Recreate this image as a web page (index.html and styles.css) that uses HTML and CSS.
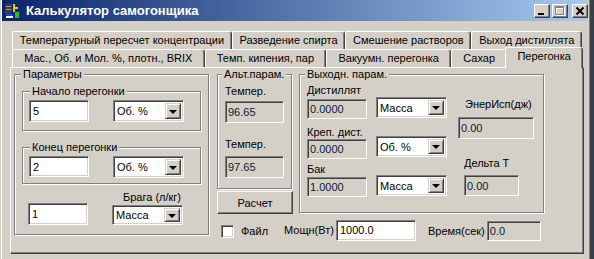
FILE: index.html
```html
<!doctype html>
<html lang="ru">
    <head>
        <meta charset="UTF-8" />
        <title>Калькулятор самогонщика</title>
        <link rel="stylesheet" href="styles.css">
    </head>
    <body>
        <div class="window">
            <div class="titlebar">
                <svg class="app-icon" width="16" height="16" viewBox="0 0 16 16" shape-rendering="crispEdges">
                    <rect x="1" y="1" width="7" height="10" fill="#3c3c3c" />
                    <rect x="2" y="3" width="5" height="1" fill="#9a9a9a" />
                    <rect x="2" y="6" width="5" height="1" fill="#9a9a9a" />
                    <rect x="9" y="1" width="2" height="8" fill="#e8d000" />
                    <rect x="11" y="4" width="3" height="2" fill="#e8d000" />
                    <rect x="2" y="11" width="7" height="2" fill="#1c3cd8" />
                    <rect x="2" y="13" width="7" height="2" fill="#ffffff" />
                    <rect x="11" y="9" width="4" height="6" fill="#20c020" />
                </svg>
                <span class="title">Калькулятор самогонщика</span>
                <div class="caption-buttons">
                    <div class="cap-btn">
                        <svg width="14" height="12" viewBox="0 0 14 12" shape-rendering="crispEdges">
                            <rect x="3" y="8" width="6" height="2" fill="#000" />
                        </svg>
                    </div>
                    <div class="cap-btn">
                        <svg width="14" height="12" viewBox="0 0 14 12" shape-rendering="crispEdges">
                            <path d="M3 2h9v9h-9z M4 4v6h7v-6z" fill="#fff" fill-rule="evenodd" />
                            <path d="M2 1h9v9h-9z M3 3v6h7v-6z" fill="#808080" fill-rule="evenodd" />
                        </svg>
                    </div>
                    <div class="cap-btn close">
                        <svg width="14" height="12" viewBox="0 0 14 12">
                            <path d="M3.5 2.5l7 7M10.5 2.5l-7 7" stroke="#000" stroke-width="2" />
                        </svg>
                    </div>
                </div>
            </div>

            <div class="client">
                <div class="tab-row">
                    <div class="tab">Температурный пересчет концентрации</div>
                    <div class="tab">Разведение спирта</div>
                    <div class="tab">Смешение растворов</div>
                    <div class="tab">Выход дистиллята</div>
                </div>
                <div class="tab-row front">
                    <div class="tab">Мас., Об. и Мол. %, плотн., BRIX</div>
                    <div class="tab">Темп. кипения, пар</div>
                    <div class="tab">Вакуумн. перегонка</div>
                    <div class="tab">Сахар</div>
                    <div class="tab active">Перегонка</div>
                </div>

                <div class="panel">
                    <fieldset class="group params">
                        <legend>Параметры</legend>
                        <fieldset class="group sub start">
                            <legend>Начало перегонки</legend>
                            <div class="pair">
                                <div class="edit">5</div>
                                <div class="combo"><span>Об. %</span><i class="drop"></i></div>
                            </div>
                        </fieldset>
                        <fieldset class="group sub end">
                            <legend>Конец перегонки</legend>
                            <div class="pair">
                                <div class="edit">2</div>
                                <div class="combo"><span>Об. %</span><i class="drop"></i></div>
                            </div>
                        </fieldset>
                        <div class="pair braga">
                            <div class="edit">1</div>
                            <div class="braga-col">
                                <div class="label braga-label">Брага (л/кг)</div>
                                <div class="combo"><span>Масса</span><i class="drop"></i></div>
                            </div>
                        </div>
                    </fieldset>

                    <div class="right">
                        <div class="right-top">
                            <div class="alt-col">
                                <fieldset class="group alt">
                                    <legend>Альт.парам.</legend>
                                    <div class="label">Темпер.</div>
                                    <div class="edit ro">96.65</div>
                                    <div class="label second">Темпер.</div>
                                    <div class="edit ro">97.65</div>
                                </fieldset>
                                <div class="button">Расчет</div>
                            </div>

                            <fieldset class="group out">
                                <legend>Выходн. парам.</legend>
                                <div class="out-body">
                                    <div class="col c1">
                                        <div class="label">Дистиллят</div>
                                        <div class="edit ro">0.0000</div>
                                        <div class="label">Креп. дист.</div>
                                        <div class="edit ro">0.0000</div>
                                        <div class="label">Бак</div>
                                        <div class="edit ro">1.0000</div>
                                    </div>
                                    <div class="col c2">
                                        <div class="combo"><span>Масса</span><i class="drop"></i></div>
                                        <div class="combo"><span>Об. %</span><i class="drop"></i></div>
                                        <div class="combo"><span>Масса</span><i class="drop"></i></div>
                                    </div>
                                    <div class="col c3">
                                        <div class="label energy-label">ЭнерИсп(дж)</div>
                                        <div class="edit ro energy">0.00</div>
                                        <div class="label delta-label">Дельта Т</div>
                                        <div class="edit ro delta">0.00</div>
                                    </div>
                                </div>
                            </fieldset>
                        </div>

                        <div class="bottom-row">
                            <span class="checkbox"></span>
                            <span class="label file-label">Файл</span>
                            <span class="label power-label">Мощн(Вт)</span>
                            <div class="edit power">1000.0</div>
                            <span class="label time-label">Время(сек)</span>
                            <div class="edit ro time">0.0</div>
                        </div>
                    </div>
                </div>
            </div>
        </div>
    </body>
</html>
```

FILE: styles.css
```css
body {
    margin: 0;
    background-color: #34404e;
    font-family: "Liberation Sans", Arial, sans-serif;
    font-size: 11px;
    color: #000;
}

.window {
    box-sizing: border-box;
    width: 591px;
    height: 262px;
    background-color: #d4d0c8;
    border-left: 1px solid #d4d0c8;
    border-right: 1px solid #404040;
    box-shadow: inset 1px 0 #fff, inset -1px 0 #808080;
}

/* title bar */
.titlebar {
    height: 21px;
    margin: 0 2px 0 1px;
    padding-left: 2px;
    display: flex;
    align-items: center;
    background: linear-gradient(90deg, #0a246a, #a6caf0);
    color: #fff;
}

.app-icon {
    flex: none;
}

.title {
    margin-left: 6px;
    font-size: 13px;
    font-weight: 700;
    white-space: nowrap;
}

.caption-buttons {
    margin-left: auto;
    display: flex;
    gap: 2px;
}

.cap-btn {
    box-sizing: border-box;
    width: 16px;
    height: 14px;
    background-color: #d4d0c8;
    border: 1px solid;
    border-color: #fff #404040 #404040 #fff;
    box-shadow: inset -1px -1px #808080;
}

.cap-btn svg {
    display: block;
}

.cap-btn.close {
    margin-left: 2px;
}

/* tabs */
.client {
    padding: 10px 6px 0 9px;
}

.tab-row {
    display: flex;
    height: 18px;
    margin: 0 2px 0 2px;
}

.tab {
    flex: 1 1 auto;
    box-sizing: border-box;
    height: 18px;
    border: 1px solid;
    border-bottom: none;
    border-color: #fff #404040 #fff #fff;
    border-radius: 2px 3px 0 0;
    box-shadow: inset -1px 0 #808080;
    text-align: center;
    line-height: 17px;
    white-space: nowrap;
    padding: 0 6px;
}

.tab.active {
    position: relative;
    z-index: 1;
    height: 21px;
    margin: -2px -1px 0 -2px;
    background-color: #d4d0c8;
    line-height: 17px;
}

.panel {
    box-sizing: border-box;
    height: 187px;
    display: flex;
    align-items: flex-start;
    padding: 0 0 0 3px;
    border: 1px solid;
    border-color: #fff #404040 #404040 #fff;
    box-shadow: inset -1px -1px #808080;
}

/* group boxes */
.group {
    box-sizing: border-box;
    margin: 0;
    padding: 0;
    min-width: 0;
    border: 1px solid #808080;
    box-shadow: inset 1px 1px #fff, 1px 1px #fff;
}

.group legend {
    padding: 0 2px;
    line-height: 13px;
    background-color: #d4d0c8;
}

.label {
    line-height: 13px;
    white-space: nowrap;
}

.params {
    width: 195px;
    padding-bottom: 9px;
}

.params > legend {
    margin-left: 6px;
}

.sub {
    width: 179px;
    margin-left: 7px;
}

.sub > legend {
    margin-left: 7px;
}

.start {
    margin-top: 4px;
    padding-bottom: 8px;
}

.end {
    margin-top: 10px;
    padding-bottom: 5px;
}

.pair {
    display: flex;
    align-items: flex-start;
    margin-top: 2px;
}

.pair .edit {
    width: 60px;
    height: 22px;
    margin-left: 6px;
}

.pair .combo {
    margin-left: 24px;
}

.end .edit {
    height: 21px;
}

.braga {
    align-items: flex-end;
    margin-top: 7px;
}

.braga .edit {
    margin-left: 13px;
}

.braga-col {
    display: flex;
    flex-direction: column;
}

.braga-label {
    margin-left: 35px;
    margin-bottom: 1px;
}

.braga .combo {
    height: 20px;
}

/* inputs */
.edit {
    box-sizing: border-box;
    height: 21px;
    padding: 0 3px;
    background-color: #fff;
    border: 1px solid;
    border-color: #808080 #fff #fff #808080;
    box-shadow: inset 1px 1px #404040, inset -1px -1px #d4d0c8;
    display: flex;
    align-items: center;
    white-space: nowrap;
}

.edit.ro {
    background-color: #d4d0c8;
    color: #0c1a33;
    padding-left: 2px;
}

.combo {
    box-sizing: border-box;
    width: 71px;
    height: 22px;
    padding: 2px;
    display: flex;
    align-items: center;
    background-color: #fff;
    border: 1px solid;
    border-color: #808080 #fff #fff #808080;
    box-shadow: inset 1px 1px #404040, inset -1px -1px #d4d0c8;
}

.combo span {
    flex: 1;
    padding-left: 1px;
    white-space: nowrap;
}

.drop {
    box-sizing: border-box;
    width: 16px;
    height: 100%;
    display: flex;
    align-items: center;
    justify-content: center;
    background-color: #d4d0c8;
    border: 1px solid;
    border-color: #d4d0c8 #404040 #404040 #d4d0c8;
    box-shadow: inset 1px 1px #fff, inset -1px -1px #808080;
}

.drop::after {
    content: "";
    border-style: solid;
    border-width: 4px 4px 0 4px;
    border-color: #000 transparent transparent transparent;
    margin-top: 1px;
}

/* right side */
.right {
    margin-left: 8px;
    display: flex;
    flex-direction: column;
}

.right-top {
    display: flex;
    align-items: flex-start;
}

.alt-col {
    display: flex;
    flex-direction: column;
}

.alt {
    width: 75px;
    padding: 0 0 10px 7px;
}

.alt > legend {
    margin-left: -3px;
}

.alt .label {
    margin-top: 4px;
}

.alt .label.second {
    margin-top: 15px;
}

.alt .edit {
    width: 59px;
    height: 22px;
    margin-top: 3px;
}

.alt .label.second + .edit {
    margin-top: 5px;
}

.button {
    box-sizing: border-box;
    width: 76px;
    height: 23px;
    margin-top: 2px;
    display: flex;
    align-items: center;
    justify-content: center;
    border: 1px solid;
    border-color: #fff #404040 #404040 #fff;
    box-shadow: inset -1px -1px #808080;
}

.out {
    width: 245px;
    margin-left: 6px;
    padding-bottom: 15px;
}

.out > legend {
    margin-left: 5px;
}

.out-body {
    display: flex;
    align-items: flex-start;
}

.col {
    display: flex;
    flex-direction: column;
    align-items: flex-start;
}

.c1 {
    width: 60px;
    margin-left: 7px;
}

.c1 .edit {
    width: 60px;
    height: 20px;
}

.c1 .label:nth-child(1) { margin-top: 3px; }
.c1 .edit:nth-child(2) { margin-top: 2px; }
.c1 .label:nth-child(3) { margin-top: 7px; }
.c1 .label:nth-child(5) { margin-top: 4px; }
.c1 .edit:nth-child(6) { margin-top: 1px; }

.c2 {
    margin-left: 9px;
}

.c2 .combo {
    height: 21px;
    margin-top: 18px;
}

.c2 .combo:first-child {
    margin-top: 16px;
}

.c3 {
    margin-left: 11px;
}

.energy-label {
    margin: 17px 0 0 7px;
}

.energy {
    width: 76px;
    height: 22px;
    margin-top: 6px;
}

.delta-label {
    margin: 18px 0 0 6px;
}

.delta {
    width: 55px;
    margin: 5px 0 0 6px;
}

/* bottom row */
.bottom-row {
    display: flex;
    align-items: center;
    margin-top: 5px;
}

.checkbox {
    box-sizing: border-box;
    width: 13px;
    height: 13px;
    margin: 3px 0 0 4px;
    background-color: #fff;
    border: 1px solid;
    border-color: #808080 #fff #fff #808080;
    box-shadow: inset 1px 1px #404040, inset -1px -1px #d4d0c8;
}

.file-label {
    margin: 3px 0 0 7px;
}

.power-label {
    margin: 1px 0 0 16px;
}

.power {
    width: 80px;
    margin-left: 2px;
}

.time-label {
    margin: 2px 0 0 12px;
}

.time {
    width: 54px;
    height: 20px;
    margin: 2px 0 0 2px;
}
```
